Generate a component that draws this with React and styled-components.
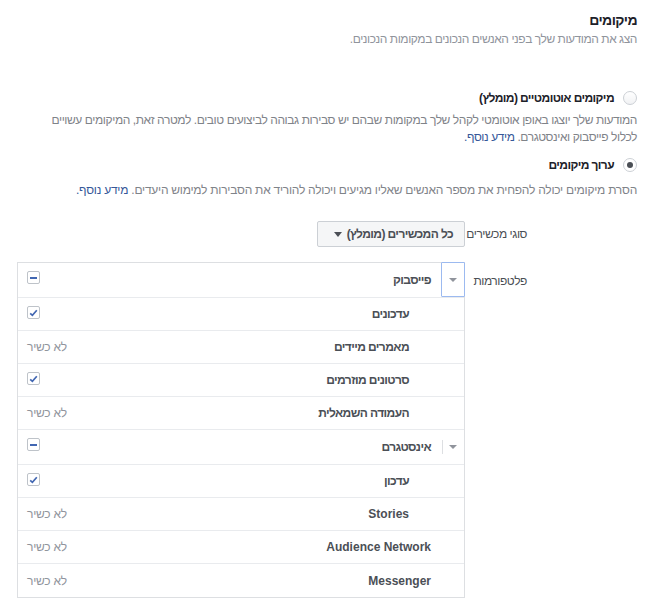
import React from "react";
import styled, { createGlobalStyle } from "styled-components";

const Global = createGlobalStyle`
  html, body { margin: 0; padding: 0; background: #fff; }
  body {
    font-family: "Liberation Sans", Arial, Helvetica, sans-serif;
    font-size: 12px;
    color: #4b4f56;
  }
  * { box-sizing: border-box; }
`;

const Page = styled.div`
  direction: rtl;
  width: 652px;
  padding: 11px 15px 0 15px;
  letter-spacing: -0.25px;
`;

const Title = styled.div`
  font-size: 14px;
  font-weight: bold;
  line-height: 18px;
  color: #1d2129;
  letter-spacing: -0.6px;
`;

const Subtitle = styled.div`
  margin-top: 2px;
  line-height: 16px;
  color: #90949c;
  letter-spacing: -0.45px;
`;

const RadioRow = styled.label`
  display: flex;
  align-items: center;
  gap: 9px;
  height: 18px;
  margin-top: ${(p) => p.$mt}px;
  font-weight: bold;
  color: #1d2129;
  letter-spacing: -0.6px;
`;

const Radio = styled.span`
  width: 14px;
  height: 14px;
  border-radius: 50%;
  border: 1px solid #ccd0d5;
  background: ${(p) => (p.$on ? "#fff" : "linear-gradient(#fff, #f1f2f4)")};
  display: flex;
  align-items: center;
  justify-content: center;
  flex: none;
  &::after {
    content: "";
    display: ${(p) => (p.$on ? "block" : "none")};
    width: 6px;
    height: 6px;
    border-radius: 50%;
    background: #4b4f56;
  }
`;

const Desc = styled.div`
  margin-top: ${(p) => p.$mt}px;
  line-height: 17px;
  color: #7f8389;
  white-space: nowrap;
  letter-spacing: ${(p) => p.$ls || -0.25}px;
`;

const Link = styled.a`
  color: #365899;
  text-decoration: none;
`;

const FormRow = styled.div`
  display: flex;
  align-items: ${(p) => (p.$top ? "flex-start" : "center")};
  margin-top: ${(p) => p.$mt}px;
  padding-right: 110px;
`;

const FieldLabel = styled.div`
  width: 62px;
  flex: none;
  white-space: nowrap;
  line-height: 16px;
  color: #4b4f56;
  letter-spacing: -0.45px;
  padding-top: ${(p) => p.$pt || 0}px;
`;

const Dropdown = styled.button`
  direction: rtl;
  display: flex;
  align-items: center;
  gap: 5px;
  height: 26px;
  padding: 0 11px 0 16px;
  border: 1px solid #ccd0d5;
  border-radius: 2px;
  background: #f5f6f7;
  font-family: inherit;
  font-size: 12px;
  font-weight: bold;
  letter-spacing: -0.6px;
  color: #4b4f56;
`;

const Caret = styled.span`
  width: 0;
  height: 0;
  border-left: ${(p) => p.$w || 4}px solid transparent;
  border-right: ${(p) => p.$w || 4}px solid transparent;
  border-top: ${(p) => p.$h || 5}px solid ${(p) => p.$c || "#4b4f56"};
`;

const Table = styled.div`
  width: 448px;
  border: 1px solid #dddfe2;
`;

const Row = styled.div`
  position: relative;
  display: flex;
  align-items: center;
  height: ${(p) => (p.$header ? 35 : 33)}px;
  border-bottom: 1px solid #e9ebee;
  padding-left: 9px;
  padding-right: ${(p) => (p.$level ? 55 : 33)}px;
  &:last-child { border-bottom: none; }
`;

const Toggle = styled.div`
  position: absolute;
  top: ${(p) => (p.$focus ? -1 : 0)}px;
  right: -1px;
  width: 24px;
  height: ${(p) => (p.$focus ? "calc(100% + 1px)" : "100%")};
  display: flex;
  align-items: center;
  justify-content: center;
  border: 1px solid ${(p) => (p.$focus ? "#9cbaf0" : "transparent")};
  border-radius: 1px;
  &::before {
    content: "";
    display: ${(p) => (p.$focus ? "none" : "block")};
    position: absolute;
    left: 0;
    top: 50%;
    margin-top: -7px;
    width: 1px;
    height: 14px;
    background: #dddfe2;
  }
`;

const Name = styled.div`
  font-weight: bold;
  color: #4b4f56;
  line-height: 16px;
  flex: 1;
  letter-spacing: ${(p) => (p.$latin ? "0" : "-0.6px")};
`;

const NotAvail = styled.div`
  color: #90949c;
  line-height: 16px;
`;

const Box = styled.span`
  align-self: flex-start;
  margin-top: ${(p) => (p.$header ? 8 : 8)}px;
  width: 13px;
  height: 13px;
  border: 1px solid #bec3c9;
  border-radius: 2px;
  background: #fff;
  display: flex;
  align-items: center;
  justify-content: center;
`;

const Minus = styled.span`
  width: 7px;
  height: 2px;
  background: #4267b2;
`;

function Check({ kind, header }) {
  return (
    <Box $header={header}>
      {kind === "minus" ? (
        <Minus />
      ) : (
        <svg width="9" height="8" viewBox="0 0 9 8">
          <path d="M1.2 4.3 L3.4 6.3 L7.8 1.3" fill="none" stroke="#4267b2" strokeWidth="1.7" />
        </svg>
      )}
    </Box>
  );
}

const rows = [
  { name: "פייסבוק", header: true, focus: true, check: "minus" },
  { name: "עדכונים", level: 1, check: "on" },
  { name: "מאמרים מיידים", level: 1 },
  { name: "סרטונים מוזרמים", level: 1, check: "on" },
  { name: "העמודה השמאלית", level: 1 },
  { name: "אינסטגרם", header: true, check: "minus" },
  { name: "עדכון", level: 1, check: "on" },
  { name: "Stories", level: 1, latin: true },
  { name: "Audience Network", level: 0, latin: true },
  { name: "Messenger", level: 0, latin: true },
];

export default function App() {
  return (
    <>
      <Global />
      <Page>
        <Title>מיקומים</Title>
        <Subtitle>הצג את המודעות שלך בפני האנשים הנכונים במקומות הנכונים.</Subtitle>

        <RadioRow $mt={42}>
          <Radio />
          מיקומים אוטומטיים (מומלץ)
        </RadioRow>
        <Desc $mt={5} $ls={-0.42}>
          המודעות שלך יוצגו באופן אוטומטי לקהל שלך במקומות שבהם יש סבירות גבוהה לביצועים טובים. למטרה זאת, המיקומים עשויים
          <br />
          לכלול פייסבוק ואינסטגרם. <Link href="#">מידע נוסף.</Link>
        </Desc>

        <RadioRow $mt={10}>
          <Radio $on />
          ערוך מיקומים
        </RadioRow>
        <Desc $mt={8}>
          הסרת מיקומים יכולה להפחית את מספר האנשים שאליו מגיעים ויכולה להוריד את הסבירות למימוש היעדים.{" "}
          <Link href="#">מידע נוסף.</Link>
        </Desc>

        <FormRow $mt={22}>
          <FieldLabel>סוגי מכשירים</FieldLabel>
          <Dropdown>
            כל המכשירים (מומלץ)
            <Caret $w={4} $h={5} />
          </Dropdown>
        </FormRow>

        <FormRow $mt={15} $top>
          <FieldLabel $pt={11}>פלטפורמות</FieldLabel>
          <Table>
            {rows.map((r) => (
              <Row key={r.name} $header={r.header} $level={r.level}>
                {r.header && (
                  <Toggle $focus={r.focus}>
                    <Caret $w={4} $h={4} $c="#90949c" />
                  </Toggle>
                )}
                <Name $latin={r.latin}>{r.name}</Name>
                {r.check ? <Check kind={r.check} header={r.header} /> : <NotAvail>לא כשיר</NotAvail>}
              </Row>
            ))}
          </Table>
        </FormRow>
      </Page>
    </>
  );
}
